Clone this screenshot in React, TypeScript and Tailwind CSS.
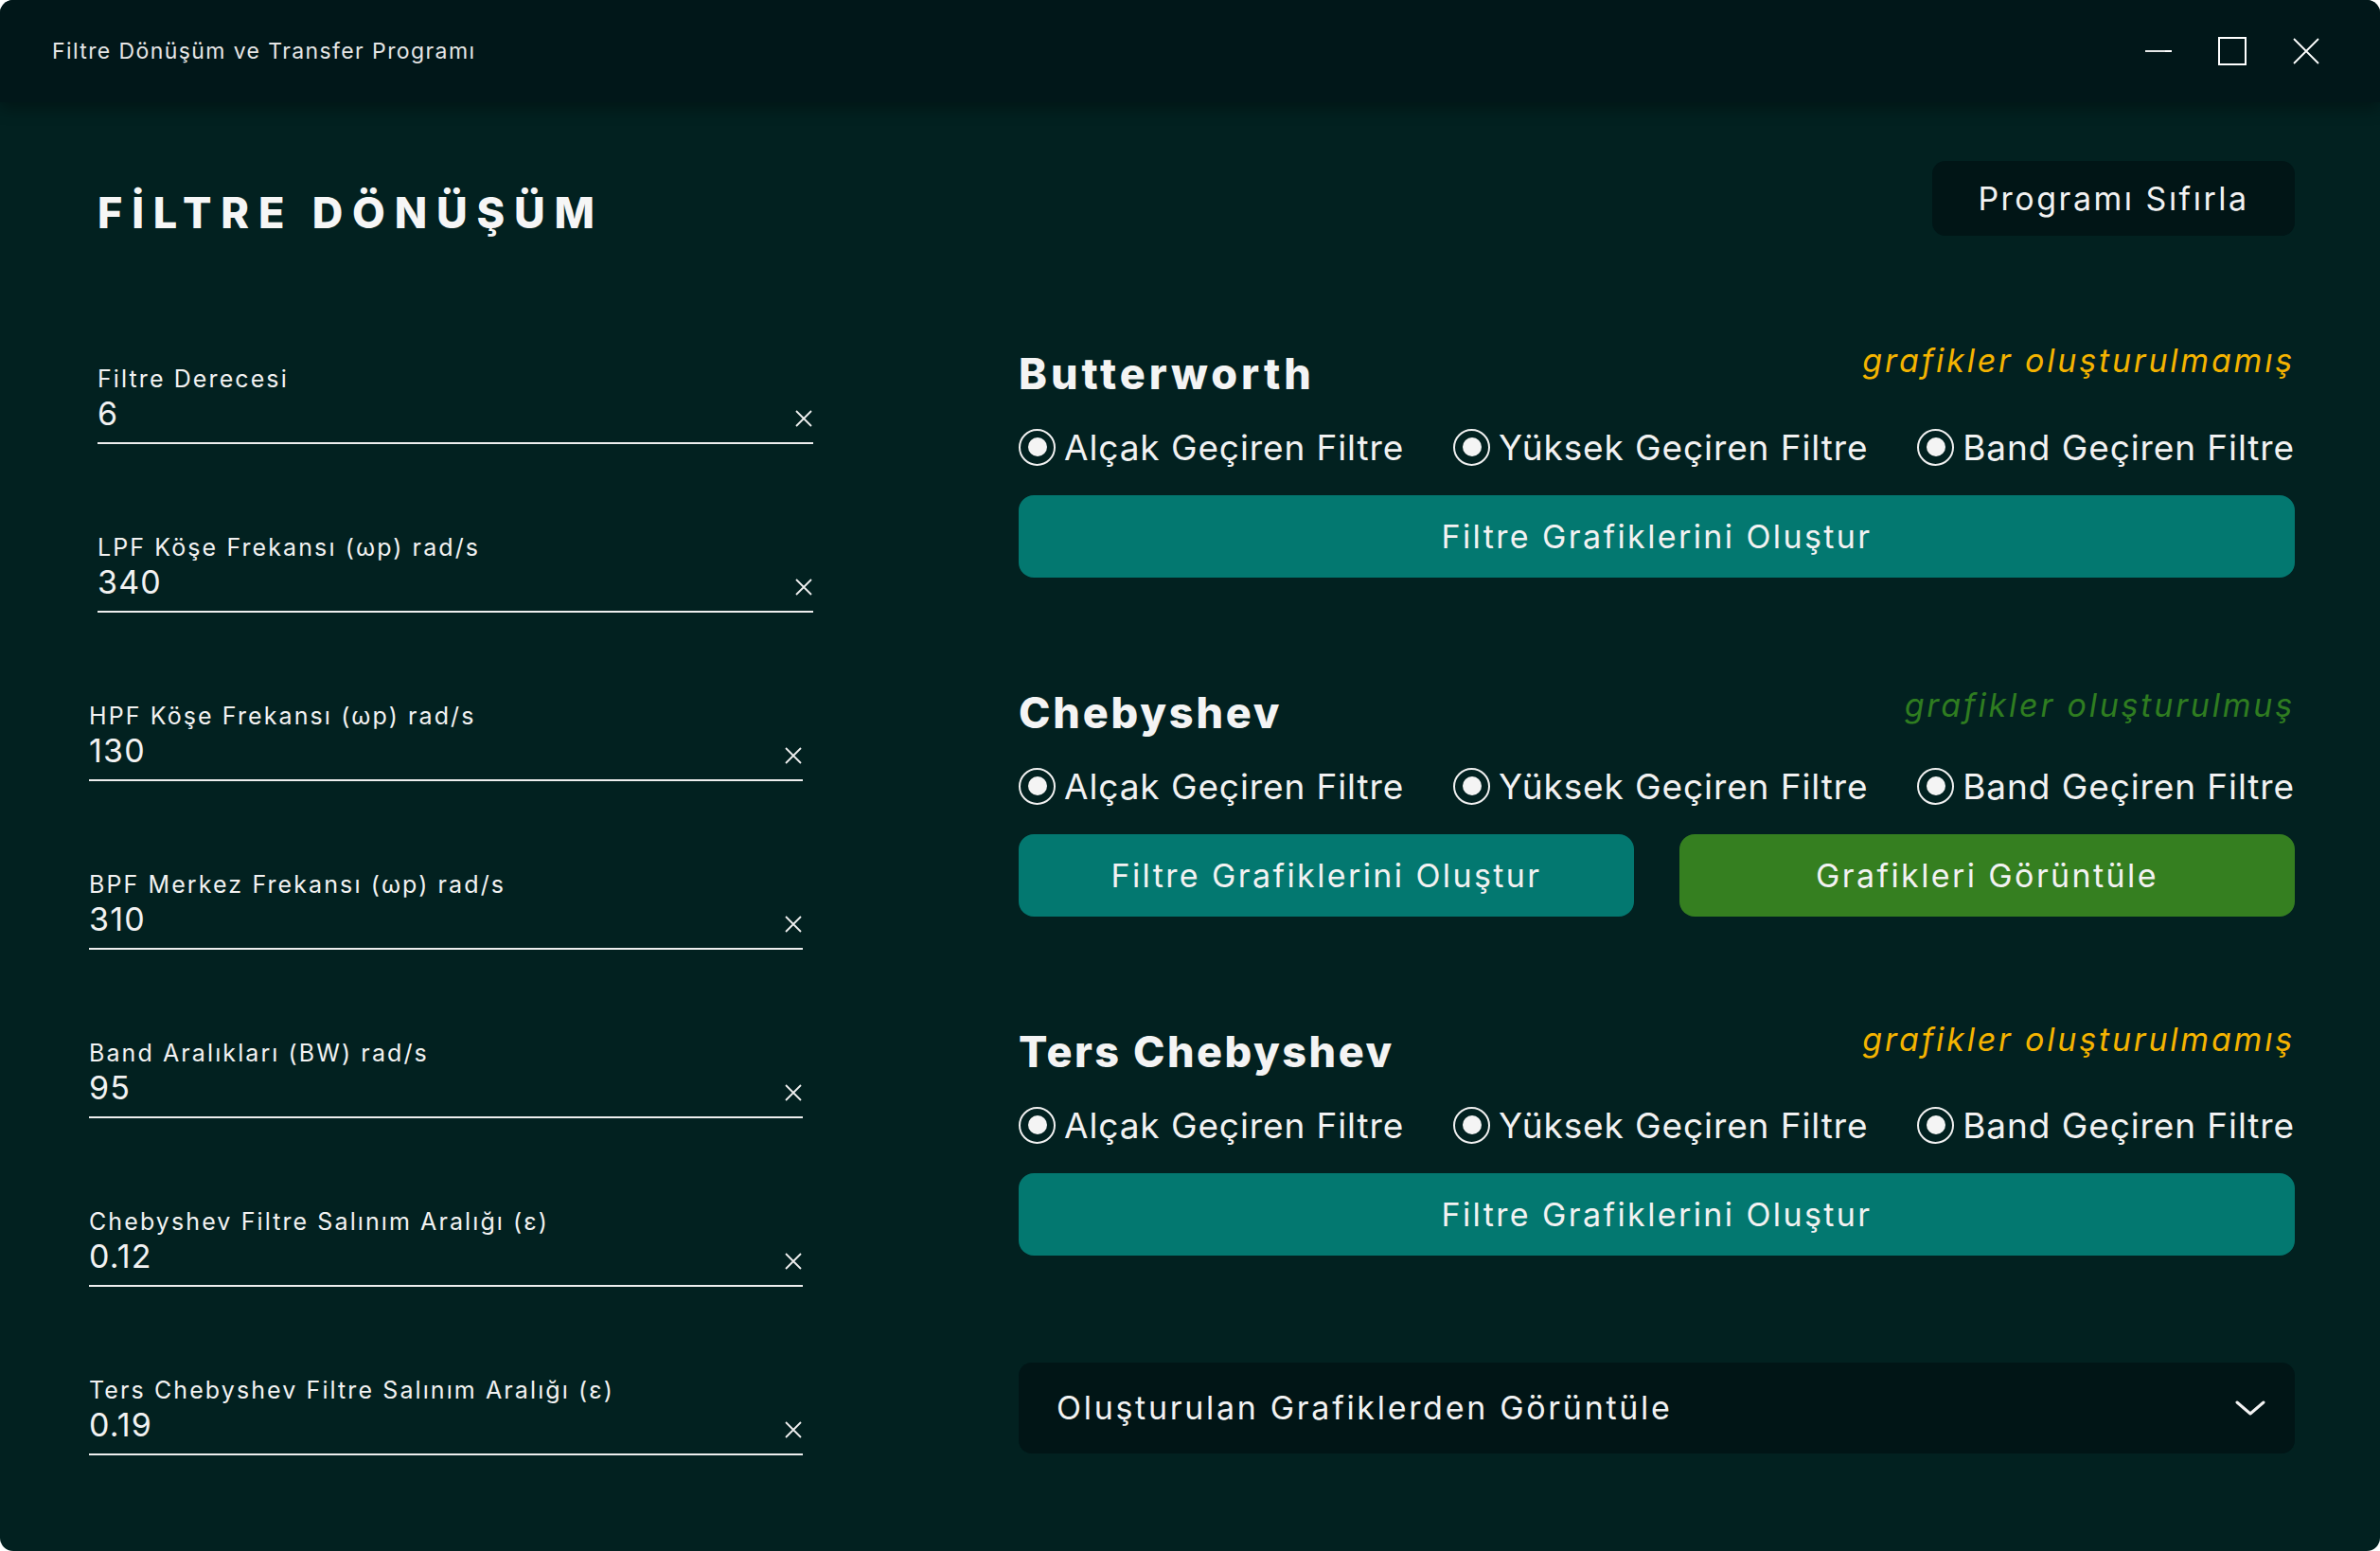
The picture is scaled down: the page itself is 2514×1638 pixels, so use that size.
import React from "react";

function XIcon() {
  return (
    <svg width="20" height="18" viewBox="0 0 20 18" fill="none">
      <path d="M2 1 L18 17 M18 1 L2 17" stroke="#f0f0f0" strokeWidth="1.8" />
    </svg>
  );
}

function Field({ label, value, shift }: { label: string; value: string; shift?: boolean }) {
  return (
    <div className={shift ? "ml-[9px] w-[756px]" : "w-[754px]"}>
      <div className="h-[30px] flex items-center text-[25px] leading-none tracking-[2.1px] text-[#f2f2f2]">{label}</div>
      <div className="mt-[2px] h-[40px] flex items-center justify-between">
        <span className="text-[34px] leading-none tracking-[1.2px] text-[#f2f2f2]">{value}</span>
        <span className="mt-[10px] flex">
          <XIcon />
        </span>
      </div>
      <div className="mt-[10px] h-[2px] bg-[#eeeeee]" />
    </div>
  );
}

function Radio({ label }: { label: string }) {
  return (
    <div className="flex items-center h-[44px]">
      <div className="w-[39px] h-[39px] rounded-full border-2 border-[#f0f0f0] flex items-center justify-center">
        <div className="w-[20px] h-[20px] rounded-full bg-[#f4f4f4]" />
      </div>
      <span className="ml-[9px] text-[37px] leading-none tracking-[0.9px] text-[#f2f2f2]">{label}</span>
    </div>
  );
}

function Section({
  title,
  titleClass,
  status,
  statusClass,
  children,
}: {
  title: string;
  titleClass: string;
  status: string;
  statusClass: string;
  children: React.ReactNode;
}) {
  return (
    <div>
      <div className="h-[56px] flex justify-between items-start">
        <h2 className={titleClass}>{title}</h2>
        <span className={statusClass}>{status}</span>
      </div>
      <div className="mt-[28px] flex justify-between">
        <Radio label="Alçak Geçiren Filtre" />
        <Radio label="Yüksek Geçiren Filtre" />
        <Radio label="Band Geçiren Filtre" />
      </div>
      <div className="mt-[29px]">{children}</div>
    </div>
  );
}

function TealButton() {
  return (
    <div className="h-[87px] rounded-[16px] bg-[#037870] flex items-center justify-center text-[34px] leading-none tracking-[2.4px] text-[#f2f2f2]">
      Filtre Grafiklerini Oluştur
    </div>
  );
}

export default function App() {
  return (
    <div className="w-[2514px] h-[1638px] bg-white font-['Inter',sans-serif]">
      <div className="w-full h-full rounded-[14px] overflow-hidden bg-[#022120] flex flex-col">
        {/* Title bar */}
        <div className="relative z-10 h-[108px] shrink-0 bg-[#011719] shadow-[0_6px_16px_rgba(0,0,0,0.35)] flex items-center justify-between pl-[55px] pr-[64px]">
          <span className="text-[23px] leading-none tracking-[1.4px] text-[#e6e6e6]">Filtre Dönüşüm ve Transfer Programı</span>
          <div className="flex items-center gap-[49px]">
            <svg width="28" height="28" viewBox="0 0 28 28" fill="none">
              <path d="M0 14 H28" stroke="#ffffff" strokeWidth="1.8" />
            </svg>
            <svg width="30" height="30" viewBox="0 0 30 30" fill="none">
              <rect x="1" y="1" width="28" height="28" stroke="#ffffff" strokeWidth="2" />
            </svg>
            <svg width="28" height="28" viewBox="0 0 28 28" fill="none">
              <path d="M1 1 L27 27 M27 1 L1 27" stroke="#ffffff" strokeWidth="1.8" />
            </svg>
          </div>
        </div>

        {/* Header */}
        <div className="flex justify-between items-start pl-[103px] pr-[90px] pt-[62px]">
          <h1 className="mt-[31px] mb-[2px] h-[46px] flex items-center text-[45px] font-extrabold leading-none tracking-[9.8px] text-[#f6f6f6]">
            FİLTRE DÖNÜŞÜM
          </h1>
          <div className="h-[79px] w-[383px] rounded-[14px] bg-[#011516] flex items-center justify-center text-[34px] leading-none tracking-[2.5px] text-[#f2f2f2]">
            Programı Sıfırla
          </div>
        </div>

        {/* Body */}
        <div className="flex">
          <div className="w-[859px] pl-[94px] pt-[136px] flex flex-col gap-[94px]">
            <Field label="Filtre Derecesi" value="6" shift />
            <Field label="LPF Köşe Frekansı (ωp) rad/s" value="340" shift />
            <Field label="HPF Köşe Frekansı (ωp) rad/s" value="130" />
            <Field label="BPF Merkez Frekansı (ωp) rad/s" value="310" />
            <Field label="Band Aralıkları (BW) rad/s" value="95" />
            <Field label="Chebyshev Filtre Salınım Aralığı (ε)" value="0.12" />
            <Field label="Ters Chebyshev Filtre Salınım Aralığı (ε)" value="0.19" />
          </div>

          <div className="ml-[217px] w-[1348px] pt-[117px] flex flex-col">
            <div className="flex flex-col gap-[114px]">
              <Section
                title="Butterworth"
                titleClass="h-[56px] flex items-center text-[45px] font-extrabold leading-none tracking-[4px] text-[#f4f4f4]"
                status="grafikler oluşturulmamış"
                statusClass="h-[30px] flex items-center text-[34px] italic leading-none tracking-[2.8px] text-[#f5b400]"
              >
                <TealButton />
              </Section>
              <Section
                title="Chebyshev"
                titleClass="h-[56px] flex items-center text-[45px] font-extrabold leading-none tracking-[2.8px] text-[#f4f4f4]"
                status="grafikler oluşturulmuş"
                statusClass="h-[30px] mt-[6px] flex items-center text-[34px] italic leading-none tracking-[2.8px] text-[#2f7d20]"
              >
                <div className="grid grid-cols-2 gap-[48px]">
                  <TealButton />
                  <div className="h-[87px] rounded-[16px] bg-[#357f20] flex items-center justify-center text-[34px] leading-none tracking-[2.4px] text-[#f2f2f2]">
                    Grafikleri Görüntüle
                  </div>
                </div>
              </Section>
              <Section
                title="Ters Chebyshev"
                titleClass="h-[56px] flex items-center text-[45px] font-extrabold leading-none tracking-[2.5px] text-[#f4f4f4]"
                status="grafikler oluşturulmamış"
                statusClass="h-[30px] mt-[1px] flex items-center text-[34px] italic leading-none tracking-[2.8px] text-[#f5b400]"
              >
                <TealButton />
              </Section>
            </div>

            <div className="mt-[113px] h-[96px] rounded-[14px] bg-[#011516] flex items-center justify-between pl-[40px] pr-[31px]">
              <span className="text-[34px] leading-none tracking-[2.7px] text-[#f2f2f2]">Oluşturulan Grafiklerden Görüntüle</span>
              <svg width="32" height="16" viewBox="0 0 32 16" fill="none">
                <path d="M2 2 L16 14 L30 2" stroke="#f2f2f2" strokeWidth="3" strokeLinecap="round" strokeLinejoin="round" />
              </svg>
            </div>
          </div>
        </div>
      </div>
    </div>
  );
}
